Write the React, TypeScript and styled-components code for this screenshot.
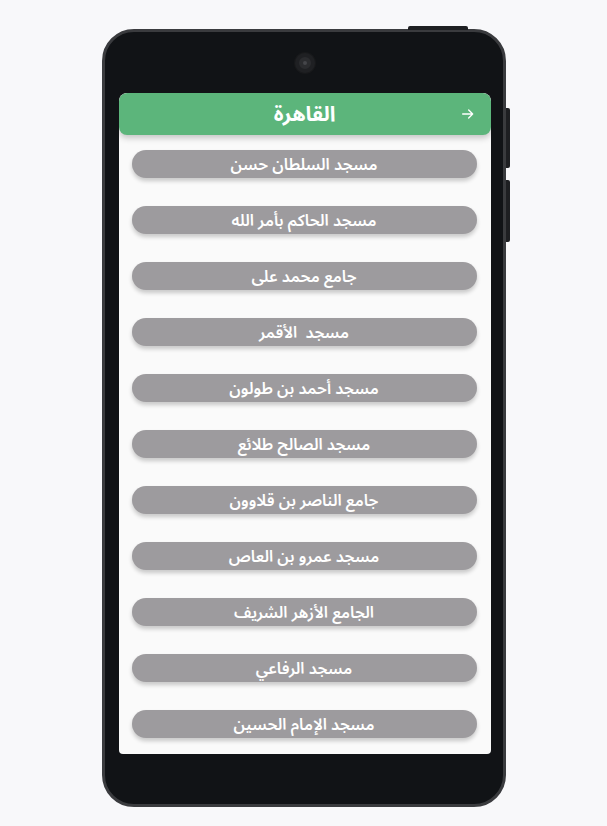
import React from 'react'
import styled, { createGlobalStyle } from 'styled-components'

const mosques = [
  'مسجد السلطان حسن',
  'مسجد الحاكم بأمر الله',
  'جامع محمد على',
  'مسجد  الأقمر',
  'مسجد أحمد بن طولون',
  'مسجد الصالح طلائع',
  'جامع الناصر بن قلاوون',
  'مسجد عمرو بن العاص',
  'الجامع الأزهر الشريف',
  'مسجد الرفاعي',
  'مسجد الإمام الحسين',
]

const App: React.FC = () => {
  return (
    <>
      <GlobalStyle />
      <Page>
        <Phone>
          <TopButton />
          <SideButton $top={76} $height={60} />
          <SideButton $top={148} $height={62} />
          <Notch>
            <Camera />
          </Notch>
          <Screen dir="rtl">
            <Header>
              <Title>القاهرة</Title>
              <BackArrow viewBox="0 0 24 24">
                <path d="M4 12h15M13 6l6 6-6 6" />
              </BackArrow>
            </Header>
            <List>
              {mosques.map(name => (
                <MosqueButton key={name}>{name}</MosqueButton>
              ))}
            </List>
          </Screen>
        </Phone>
      </Page>
    </>
  )
}

export default App

// Styles
const GlobalStyle = createGlobalStyle`
  html, body {
    margin: 0;
    padding: 0;
    background: #f8f8fa;
  }
  body {
    font-family: "Noto Sans Arabic", "DejaVu Sans", "Noto Sans", sans-serif;
  }
`

const Page = styled.div`
  width: 607px;
  height: 826px;
  display: flex;
  justify-content: center;
  padding-top: 29px;
  box-sizing: border-box;
`

const Phone = styled.div`
  position: relative;
  width: 404px;
  height: 778px;
  box-sizing: border-box;
  background: #111316;
  border: 3px solid #3a3b3e;
  border-radius: 32px;
  padding: 0 12px 0 14px;
  display: flex;
  flex-direction: column;
`

const TopButton = styled.div`
  position: absolute;
  top: -6px;
  right: 35px;
  width: 60px;
  height: 4px;
  background: #1e1f22;
  border-radius: 2px 2px 0 0;
`

const SideButton = styled.div<{ $top: number; $height: number }>`
  position: absolute;
  right: -7px;
  top: ${p => p.$top}px;
  width: 4px;
  height: ${p => p.$height}px;
  background: #1e1f22;
  border-radius: 0 2px 2px 0;
`

const Notch = styled.div`
  height: 61px;
  display: flex;
  align-items: center;
  justify-content: center;
  flex-shrink: 0;
`

const Camera = styled.div`
  width: 12px;
  height: 12px;
  border-radius: 50%;
  background: #2b2c2f;
  border: 4px solid #1f2023;
  box-shadow: 0 0 0 1px #18191b;
  position: relative;
  &::after {
    content: '';
    position: absolute;
    left: 4px;
    top: 4px;
    width: 4px;
    height: 4px;
    border-radius: 50%;
    background: #45464a;
  }
`

const Screen = styled.div`
  height: 661px;
  background: #fafafa;
  border-radius: 8px 8px 4px 4px;
  display: flex;
  flex-direction: column;
  overflow: hidden;
`

const Header = styled.div`
  height: 42px;
  flex-shrink: 0;
  background: #5cb57b;
  border-radius: 8px;
  box-shadow: 0 3px 6px rgba(0, 0, 0, 0.22);
  display: flex;
  align-items: center;
  justify-content: center;
  position: relative;
`

const Title = styled.h1`
  margin: 0;
  color: #ffffff;
  font-size: 21px;
  font-weight: 700;
  line-height: 1;
`

const BackArrow = styled.svg`
  position: absolute;
  right: 15px;
  top: 50%;
  width: 16px;
  height: 16px;
  transform: translateY(-50%);
  fill: none;
  stroke: #ffffff;
  stroke-width: 2;
  stroke-linecap: round;
  stroke-linejoin: round;
`

const List = styled.div`
  display: flex;
  flex-direction: column;
  gap: 28px;
  padding: 15px 14px 0 13px;
`

const MosqueButton = styled.button`
  height: 28px;
  border: none;
  border-radius: 14px;
  background: #9d9b9e;
  color: #ffffff;
  font-family: inherit;
  font-size: 16px;
  font-weight: 600;
  line-height: 1;
  white-space: pre;
  padding: 2px 12px 0;
  box-shadow: 0 3px 4px rgba(0, 0, 0, 0.2);
  display: flex;
  align-items: center;
  justify-content: center;
  cursor: pointer;
`
